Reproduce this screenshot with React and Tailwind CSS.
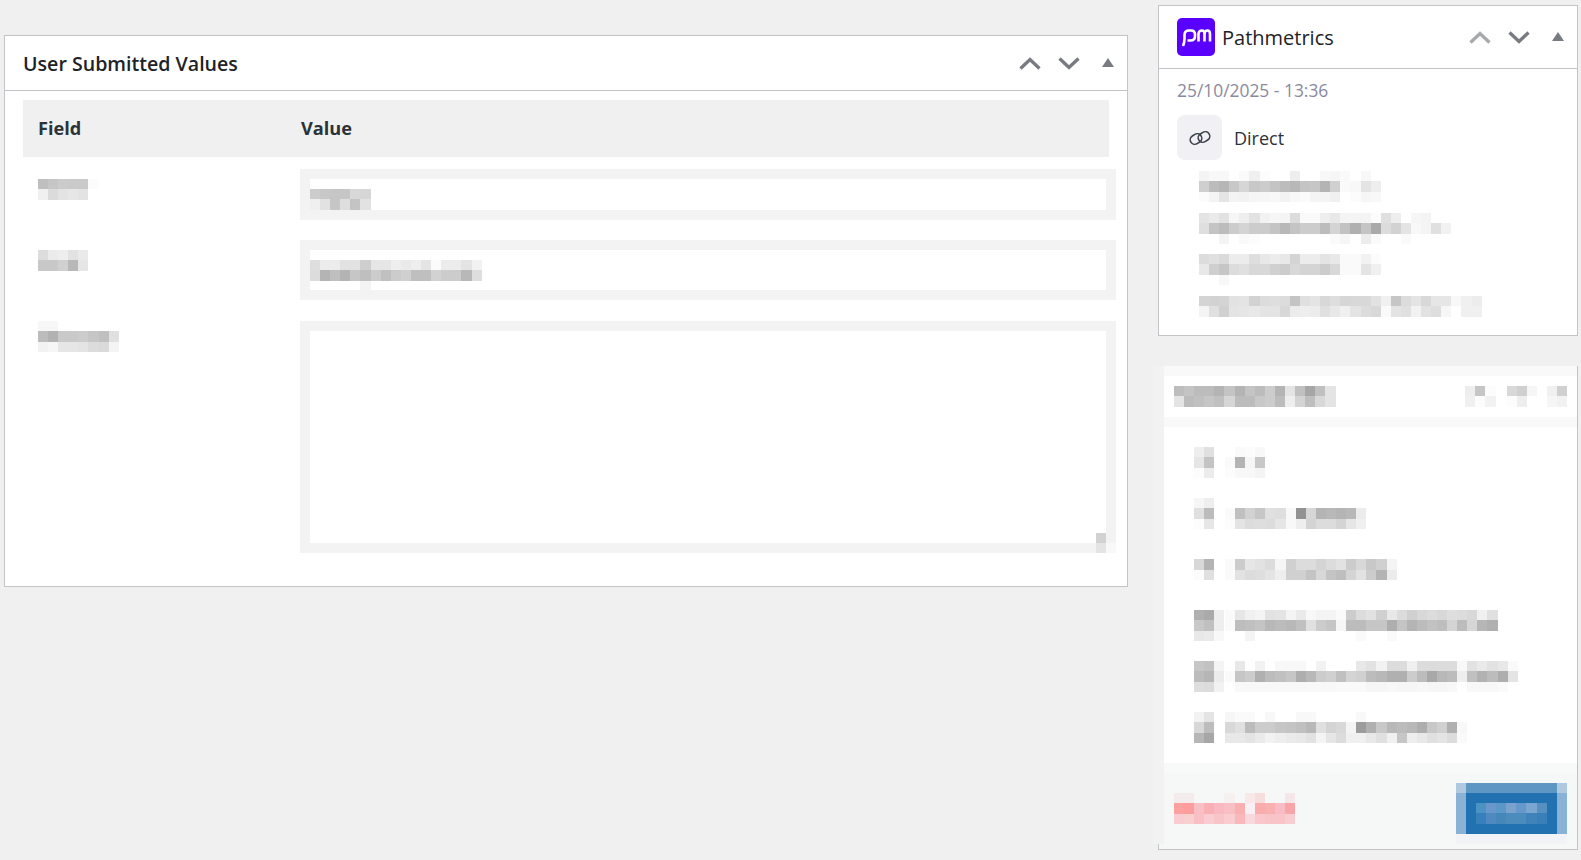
import React from "react";

const font = { fontFamily: '"Open Sans", "Noto Sans", sans-serif' };

// redacted text in the screenshot is a 10px mosaic; tokens are grey bytes or full hex, "." is empty
const Mosaic = ({ rows, className = "" }) => (
  <div className={`flex flex-col shrink-0 ${className}`}>
    {rows.map((row, i) => (
      <div key={i} className="flex h-[10.33px]">
        {row.split(" ").map((c, j) => (
          <div
            key={j}
            className="w-[10.1px] h-full"
            style={{
              backgroundColor: c === "." ? "transparent" : c.length === 2 ? `#${c}${c}${c}` : `#${c}`,
            }}
          />
        ))}
      </div>
    ))}
  </div>
);

const Chevron = ({ down, className = "" }) => (
  <svg width="22" height="13" viewBox="0 0 22 13" className={className}>
    <path
      d={down ? "M1.5 1.5 L11 10.5 L20.5 1.5" : "M1.5 11.5 L11 2.5 L20.5 11.5"}
      fill="none"
      stroke="currentColor"
      strokeWidth="3.4"
    />
  </svg>
);

const Triangle = () => (
  <svg width="12" height="9" viewBox="0 0 12 9" className="text-[#787c82] mt-[-2px]">
    <path d="M6 0 L12 9 H0 Z" fill="currentColor" />
  </svg>
);

const listRows = [
  {
    mt: "",
    icon: ["ee e0", "e6 c4", "fc ec"],
    text: [". fa fc f8", "fa b4 f6 c8", "fc f8 f8 f4"],
  },
  {
    mt: "mt-[20px]",
    icon: ["f6 ee", "e0 bc", "fc e6"],
    text: [". . . . . . . . . . . . . .", "fa c0 d2 c6 e0 de f8 92 d6 b4 b8 b4 b8 ec", "fc e4 dc de dc e6 f8 ee d4 dc dc d4 e6 f0"],
  },
  {
    mt: "mt-[20px]",
    icon: [". .", "d8 b4", "fc e0"],
    text: [". . . . .", "fa cc e6 e2 dc f6 d0 dc dc d4 dc e2 cc d8 c8 d0 f4", "fa e2 dc de e4 ee d0 d0 c4 d8 c4 be d4 e2 cc b4 ec"],
  },
  {
    mt: "mt-[30px]",
    icon: ["b0 aa ee", "c8 c0 ee", "e8 ea f8"],
    text: [
      "fa e6 f0 f4 e2 e4 f4 ea f8 f4 f4 fa cc dc e2 d0 e8 dc d0 d8 dc d8 de dc d8 f0 e0",
      "fa bd c0 c4 b8 bc b8 c0 e0 cc c6 f6 bc bc c6 c6 ae c4 b4 bc c2 be d4 bc d6 b6 b0",
      ". . f4 . . . . . . . . . . fa . . fa",
    ],
  },
  {
    mt: "mt-[20px]",
    icon: ["c6 c2 f4", "bc b6 ec", "de dc f2"],
    text: [
      ". e8 . f2 . f8 f8 f8 . f2 . . . e8 e2 f2 dc dc f0 dc dc dc dc f8 e2 ea e2 e8 fa",
      "fa c6 cc b0 bc c0 c6 ae b8 cc d0 c0 d4 d0 bc b8 b0 b0 cc bc a8 b8 bc ee c0 b2 bc ae e4",
      ". f8 f8 f8 f8 f8 f8 f8 f8 f8 f8 fa fa fa f6 f6 f8 f6 f6 f8 f6 f6 f8 . f8 f8 f8 fa .",
    ],
  },
  {
    mt: "mt-[20px]",
    icon: ["f2 e4", "d8 bc", "b6 a6"],
    text: [
      "f6 fa fa . f8 . . f8 f8 . . . . f8",
      "d8 e0 bc cc cc c6 c4 c0 b8 e0 d4 d8 f4 9c b0 c8 b8 bc b8 ae c8 d0 b0 f8",
      "e8 e8 e4 ea f2 ee ea e8 e2 f4 e6 dc f0 f0 e8 e0 f0 c6 ee e8 e0 e4 dc fa",
    ],
  },
];

const App = () => {
  return (
    <div className="flex w-[1581px] h-[860px] overflow-hidden bg-[#f0f0f1]" style={font}>
      {/* Left column */}
      <div className="w-[1124px] ml-[4px] mt-[35px] shrink-0">
        <div className="h-[552px] bg-white border border-[#c3c4c7]">
          <div className="h-[55px] flex items-center justify-between border-b border-[#c3c4c7] pl-[18px] pr-[13px]">
            <h2 className="text-[19.6px] leading-none font-semibold text-[#1d2327] mt-[2px]">User Submitted Values</h2>
            <div className="flex items-center text-[#787c82]">
              <Chevron />
              <Chevron down className="ml-[17px]" />
              <div className="ml-[22px]"><Triangle /></div>
            </div>
          </div>
          <div className="pl-[18px] pr-[18px] pt-[9px]">
            <div className="h-[57px] bg-[#f0f0f1] flex items-center text-[18.2px] font-bold text-[#2c3338] pt-[1px]">
              <div className="w-[278px] pl-[15px]">Field</div>
              <div>Value</div>
            </div>
            <div className="flex mt-[12px]">
              <div className="w-[277px] pl-[15px] pt-[10px] shrink-0">
                <Mosaic rows={["bf c6 cb ca ca fc", "f0 db e3 e6 e3"]} />
              </div>
              <div className="w-[816px] h-[51px] shrink-0 border-[10px] border-[#f3f3f3] bg-white pt-[10px]">
                <Mosaic rows={["cc c8 c6 c6 d8 d6", "ef e2 c6 de c4 e2"]} />
              </div>
            </div>
            <div className="flex mt-[20px]">
              <div className="w-[277px] pl-[15px] pt-[10px] shrink-0">
                <Mosaic rows={["dd eb ee e2 ea", "c8 c8 d0 b8 e6"]} />
              </div>
              <div className="w-[816px] h-[60px] shrink-0 border-[10px] border-[#f3f3f3] bg-white pt-[10px]">
                <Mosaic
                  rows={[
                    "de ec ec e2 e2 ce e6 e6 ee ea ee e4 fb ec ec e4 f2",
                    "dc b4 bf b4 c6 bf cc c0 cc d0 bf bf d2 cc cc b8 de",
                    ". . . . . f3",
                  ]}
                />
              </div>
            </div>
            <div className="flex mt-[21px]">
              <div className="w-[277px] pl-[15px] shrink-0">
                <Mosaic
                  rows={["f7 f7 . . . . . .", "bc b2 c9 c9 cc c6 c0 e0", "f2 f6 e6 e6 e4 dc da f4"]}
                />
              </div>
              <div className="relative w-[816px] h-[232px] shrink-0 border-[10px] border-[#f3f3f3] bg-white">
                <div className="absolute right-0 bottom-0 w-[10px] h-[10px] bg-[#d2d2d2]" />
                <div className="absolute right-0 bottom-[-10px] w-[10px] h-[10px] bg-[#e4e4e4]" />
                <div className="absolute right-[-10px] bottom-[-10px] w-[10px] h-[10px] bg-[#f8f8f8]" />
              </div>
            </div>
          </div>
        </div>
      </div>

      {/* Right column */}
      <div className="w-[420px] ml-[30px] mt-[5px] shrink-0">
        <div className="h-[331px] bg-white border border-[#c3c4c7]">
          <div className="h-[63px] flex items-center justify-between border-b border-[#c3c4c7] pl-[18px] pr-[13px]">
            <div className="flex items-center">
              <div className="w-[38px] h-[38px] rounded-[5px] bg-[#5a00ff] flex items-center justify-center">
                <svg width="38" height="38" viewBox="0 0 38 38">
                  <path
                    d="M6 28 C7 26 7.5 24 7.5 21 V17 C7.5 14 9.5 12.5 12 12.5 H14 C16.5 12.5 18 14 18 16.5 V18 C18 21 16 22.5 13.5 22.5 H10.5"
                    fill="none"
                    stroke="white"
                    strokeWidth="2.6"
                  />
                  <path
                    d="M21.5 23.5 V16 C21.5 14 22.5 12.5 25 12.5 C27 12.5 27.5 14 27.5 16 V23.5 M27.5 16 C27.5 14 28.5 12.5 30.5 12.5 C32.5 12.5 33 14 33 16 V23.5"
                    fill="none"
                    stroke="white"
                    strokeWidth="2.6"
                  />
                </svg>
              </div>
              <span className="ml-[7px] text-[20px] font-medium text-[#1d2327] mt-[2px]">Pathmetrics</span>
            </div>
            <div className="flex items-center">
              <Chevron className="text-[#a7aaad]" />
              <Chevron down className="ml-[17px] text-[#787c82]" />
              <div className="ml-[22px]"><Triangle /></div>
            </div>
          </div>
          <div className="pl-[18px]">
            <div className="h-[46px] flex items-center text-[17.4px] text-[#8a8a9e] pb-[3px]">25/10/2025 - 13:36</div>
            <div className="flex items-center">
              <div className="w-[45px] h-[45px] rounded-lg bg-[#f0f0f5] flex items-center justify-center">
                <svg width="24" height="20" viewBox="0 0 24 20" fill="none" stroke="#3c434a" strokeWidth="1.6">
                  <rect x="2" y="6.5" width="12" height="9" rx="4.5" transform="rotate(-32 8 11)" />
                  <rect x="10" y="4.5" width="12" height="9" rx="4.5" transform="rotate(-32 16 9)" />
                </svg>
              </div>
              <span className="ml-[12px] text-[18px] text-[#2c3338] mt-[2px]">Direct</span>
            </div>
            <div className="pl-[22px] pt-[11px]">
              <Mosaic
                rows={[
                  "f4 f8 f8 . fa f0 fc . . ee . . f8 f6 fa . f8 .",
                  "cf bc b6 c8 d6 c8 cc c4 bc b8 c4 c6 b4 d0 fa f8 e4 ee",
                  "fb f4 e4 f4 f2 f6 f6 f8 f2 f8 fa f4 f4 f0 . fc f6 f8",
                ]}
              />
              <Mosaic
                className="mt-[11px]"
                rows={[
                  "e4 ea e2 f6 ee e2 f2 f6 f4 dc fa fa ee e8 f4 f4 f4 fc e0 ee . f6 f4",
                  "df c4 bc cc d4 cc cc c4 b8 c4 cc cc bc d4 c2 b0 c4 aa dc d2 e4 f8 f4 e0 f2",
                  ". . f4 . fa fc . . . . . . . fa f6 . ec fa . . fa",
                ]}
              />
              <Mosaic
                className="mt-[10px]"
                rows={[
                  "dc e0 da ec ec de e8 ec e8 d4 ec ec e4 e8 fa fa f2 fc",
                  "e8 cf c6 dc e0 d8 d8 d0 cc d8 d4 d4 cc d8 fa fa e4 f0",
                  ". . f8",
                ]}
              />
              <Mosaic
                className="mt-[11px]"
                rows={[
                  "d4 d2 d4 e2 e4 d2 dc de dc c4 e0 e4 d8 de d6 d8 d8 e2 f0 c6 dc e4 d8 e6 e6 f8 f0 ec",
                  "f4 e0 d0 e4 e6 e8 e4 e4 d8 ec ee ec e0 e8 f0 e4 dc d8 fa e4 e0 f2 e2 de f6 . f0 f0",
                ]}
              />
            </div>
          </div>
        </div>

        <div className="relative mt-[30px] h-[484px] bg-white border-r border-b border-l border-[#c3c4c7] flex flex-col">
          {/* mosaic edge lies over the panel's left border */}
          <div className="absolute left-[-5px] top-0 bottom-[5px] w-[10px] bg-[#f2f2f2]" />
          <div className="h-[10px] bg-[#f9f9f9]" />
          <div className="h-[41px] pl-[15px] pr-[10px] pt-[10px] flex justify-between">
            <Mosaic
              rows={[
                "bd c4 bc bc b4 c4 b4 c4 bc cc b4 e4 c0 a6 c0 e4",
                "e4 bc c0 c6 c0 d6 bc bc c8 cc bc ee d4 be d8 e4",
              ]}
            />
            <div className="flex">
              <Mosaic rows={["ee c6 fc", "f0 fc f2"]} />
              <Mosaic className="ml-[11px]" rows={["d8 d0 f6", "fc ee ."]} />
              <Mosaic className="ml-[10px]" rows={["f0 d0", "f6 f2"]} />
            </div>
          </div>
          <div className="h-[10px] bg-[#f9f9f9]" />
          <div className="h-[336px] pl-[35px] pt-[20px]">
            {listRows.map((row, i) => (
              <div key={i} className={`flex ${row.mt}`}>
                <div className="w-[31px] shrink-0">
                  <Mosaic rows={row.icon} />
                </div>
                <Mosaic rows={row.text} />
              </div>
            ))}
          </div>
          <div className="flex-1 bg-[#f6f7f7] flex flex-col">
            <div className="h-[10px] bg-[#f8f9f9]" />
            <div className="flex justify-between pl-[15px] pr-[10px] pt-[10px]">
              <Mosaic
                className="mt-[10px]"
                rows={[
                  "f4ecec f4ecec . . . f6f0f0 . f8e8e8 f6dede . . f6e6e8",
                  "fca0a0 fc9c9c f8c0c4 f8b0b4 fab8c0 f8c0c4 f8b0b0 f8f0f4 f8acac f8b0b0 f8bcc4 f8a4a8",
                  "f8ccd0 f8d0d0 f8c0c4 f8ccd0 f8c4c8 f8ccd0 f8b8bc f8d8dc f8c8cc f8c4c8 f8c4c8 f8ccd0",
                ]}
              />
              <div className="w-[111px] flex flex-col">
                <div className="h-[10px] flex">
                  <div className="w-[10px] bg-[#aec9e0]" />
                  <div className="flex-1 bg-[#5e96c4]" />
                  <div className="w-[10px] bg-[#aec9e0]" />
                </div>
                <div className="h-[41px] flex">
                  <div className="w-[10px] bg-[#8ab2d4]" />
                  <div className="flex-1 bg-[#2271b1] pt-[10px] pl-[10px]">
                    <Mosaic
                      rows={[
                        "4a93c2 6a97cb 5a98c8 7ba2cc 6699cb 7aa6cf 5590c0",
                        "3880bc 5088c0 4487b9 4c8cbd 4c8cbd 4083bb 3a7fb8",
                      ]}
                    />
                  </div>
                  <div className="w-[10px] bg-[#8ab2d4]" />
                </div>
                <div className="h-[10px] bg-[#f2f3f6]" />
              </div>
            </div>
          </div>
        </div>
      </div>
    </div>
  );
};

export default App;
